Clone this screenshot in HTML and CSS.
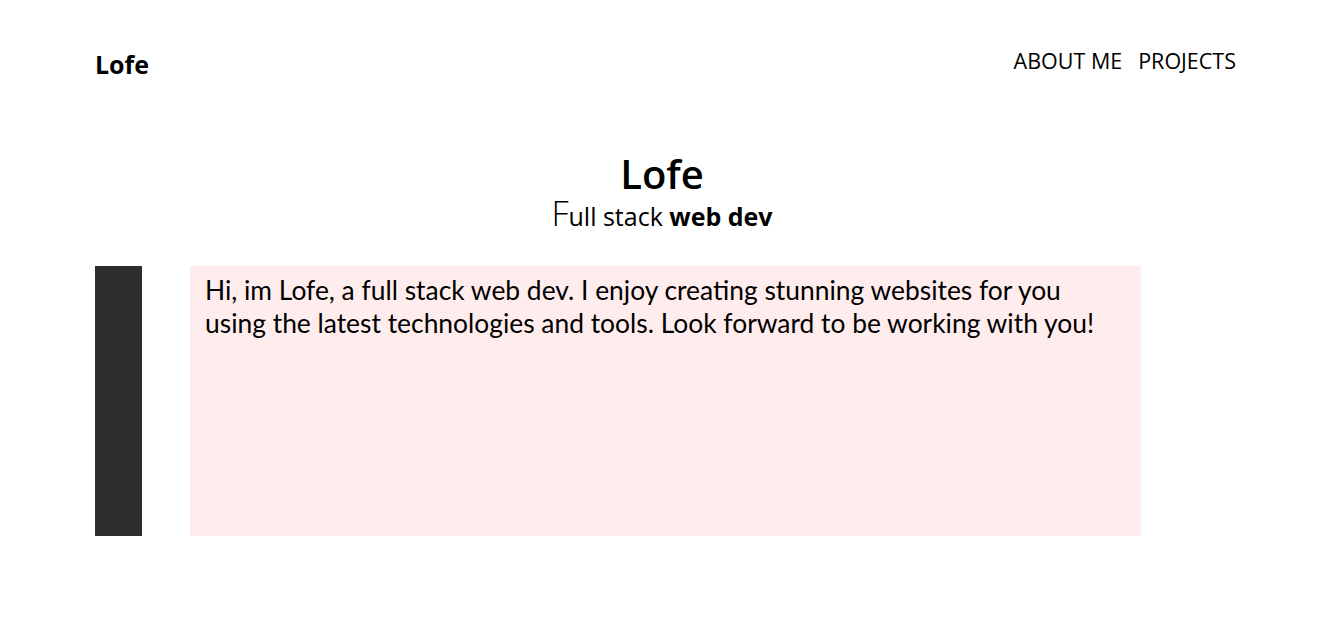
FILE: index.html
```html
<!DOCTYPE html>
<html>
<head>
<meta charset="utf-8">
<link rel="stylesheet" href="styles.css">
</head>
<body>
<header class="header">
  <div class="logo">Lofe</div>
  <nav class="nav">
    <a class="nav-link" href="#">ABOUT ME</a>
    <a class="nav-link" href="#">PROJECTS</a>
  </nav>
</header>
<section class="hero">
  <h1 class="title">Lofe</h1>
  <p class="subtitle">Full stack <b class="strong">web dev</b></p>
</section>
<section class="about">
  <div class="bar"></div>
  <div class="card">
    <p class="card-text">Hi, im Lofe, a full stack web dev. I enjoy creating stunning websites for you using the latest technologies and tools. Look forward to be working with you!</p>
  </div>
</section>
</body>
</html>
```
FILE: styles.css
```css
* { box-sizing: border-box; }
body {
  margin: 0;
  font-family: "Open Sans", "Noto Sans", sans-serif;
  color: #000;
  background: #fff;
}
.header {
  display: flex;
  justify-content: space-between;
  align-items: flex-start;
  padding: 44px 88px 0 95px;
  height: 110px;
}
.logo {
  font-size: 25px;
  font-weight: 700;
  line-height: 40px;
}
.nav {
  display: flex;
  gap: 16px;
}
.nav-link {
  color: #000;
  text-decoration: none;
  font-size: 21.5px;
  line-height: 34px;
}
.hero {
  text-align: center;
  padding-top: 39px;
}
.title {
  margin: 0;
  font-size: 40px;
  font-weight: 600;
  line-height: 50px;
}
.subtitle {
  margin: 0;
  font-size: 25px;
  font-weight: 400;
  line-height: 28px;
}
.subtitle::first-letter {
  font-size: 34px;
  font-weight: 300;
}
.strong { font-weight: 700; }
.about {
  display: flex;
  gap: 48px;
  margin-top: 36px;
  padding-left: 95px;
}
.bar {
  width: 47px;
  height: 270px;
  background: #2e2e2e;
}
.card {
  width: 951px;
  height: 270px;
  background: #ffeded;
  padding: 8px 28px 8px 15px;
}
.card-text {
  margin: 0;
  font-family: Lato, sans-serif;
  font-size: 26.4px;
  line-height: 33px;
}
```
